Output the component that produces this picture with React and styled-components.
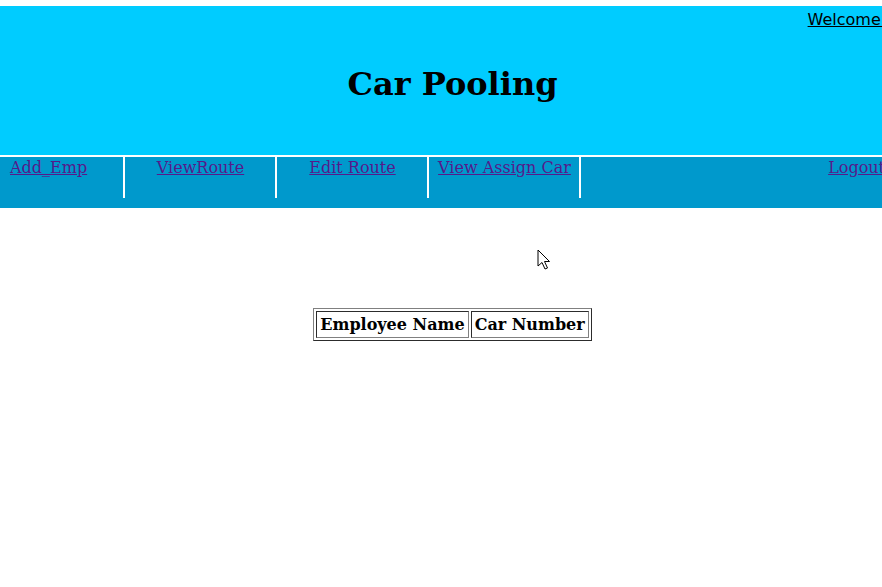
import React from "react";
import styled, { createGlobalStyle } from "styled-components";

const Global = createGlobalStyle`
  html, body { margin: 0; padding: 0; background: #fff; overflow: hidden; }
  body { font-family: "DejaVu Serif", serif; font-size: 16px; }
`;

const Page = styled.div`
  width: 905px;
  padding-top: 6px;
  position: relative;
`;

const Header = styled.header`
  height: 149px;
  background: #00ccff;
  display: flex;
  flex-direction: column;
  box-sizing: border-box;
`;

const WelcomeRow = styled.div`
  display: flex;
  justify-content: flex-end;
  padding-top: 4px;
  padding-right: 1px;
  white-space: nowrap;
`;

const WelcomeLink = styled.a`
  font-family: "DejaVu Sans", sans-serif;
  font-size: 16px;
  color: #000;
  text-decoration: underline;
`;

const Title = styled.h1`
  margin: 36px 0 0;
  text-align: center;
  font-family: "DejaVu Serif", serif;
  font-size: 32px;
  font-weight: bold;
  color: #000;
`;

const Nav = styled.nav`
  margin-top: 2px;
  height: 51px;
  background: #0099cc;
  display: flex;
  align-items: flex-start;
`;

const NavCell = styled.div`
  width: ${(p) => p.$w}px;
  height: 40px;
  border-right: 2px solid #fff;
  padding-top: 1px;
  box-sizing: content-box;
  text-align: ${(p) => (p.$left ? "left" : "center")};
  padding-left: ${(p) => (p.$left ? "10px" : "0")};
  white-space: nowrap;
`;

const CenteredLink = styled.span`
  display: inline-block;
  padding-left: 1px;
`;

const LogoutCell = styled.div`
  margin-left: auto;
  padding-top: 1px;
  padding-right: 20px;
  white-space: nowrap;
`;

const NavLink = styled.a`
  color: #551a8b;
  text-decoration: underline;
  font-family: "DejaVu Serif", serif;
  font-size: 16px;
`;

const Table = styled.table`
  margin: 100px auto 0;
  border: 1px outset #808080;
  border-spacing: 2px;
  border-collapse: separate;
`;

const Th = styled.th`
  border: 1px inset #808080;
  padding: 2px 3px;
  font-family: "DejaVu Serif", serif;
  font-size: 16px;
  font-weight: bold;
  line-height: 21px;
  white-space: nowrap;
`;

const Cursor = styled.svg`
  position: absolute;
  left: 537px;
  top: 249px;
`;

export default function App() {
  return (
    <>
      <Global />
      <Page>
        <Header>
          <WelcomeRow>
            <WelcomeLink href="#">Welcome sa</WelcomeLink>
          </WelcomeRow>
          <Title>Car Pooling</Title>
        </Header>
        <Nav>
          <NavCell $w={113} $left>
            <NavLink href="#">Add_Emp</NavLink>
          </NavCell>
          <NavCell $w={150}>
            <CenteredLink>
              <NavLink href="#">ViewRoute</NavLink>
            </CenteredLink>
          </NavCell>
          <NavCell $w={150}>
            <CenteredLink>
              <NavLink href="#">Edit Route</NavLink>
            </CenteredLink>
          </NavCell>
          <NavCell $w={150}>
            <CenteredLink>
              <NavLink href="#">View Assign Car</NavLink>
            </CenteredLink>
          </NavCell>
          <LogoutCell>
            <NavLink href="#">Logout</NavLink>
          </LogoutCell>
        </Nav>
        <Table>
          <thead>
            <tr>
              <Th>Employee Name</Th>
              <Th>Car Number</Th>
            </tr>
          </thead>
        </Table>
        <Cursor width="14" height="22" viewBox="0 0 14 22">
          <path
            d="M1 1 L1 17 L5 13.5 L8 20 L10.5 19 L7.5 12.5 L12.5 12.5 Z"
            fill="#fff"
            stroke="#000"
            strokeWidth="1"
            strokeLinejoin="round"
          />
        </Cursor>
      </Page>
    </>
  );
}
